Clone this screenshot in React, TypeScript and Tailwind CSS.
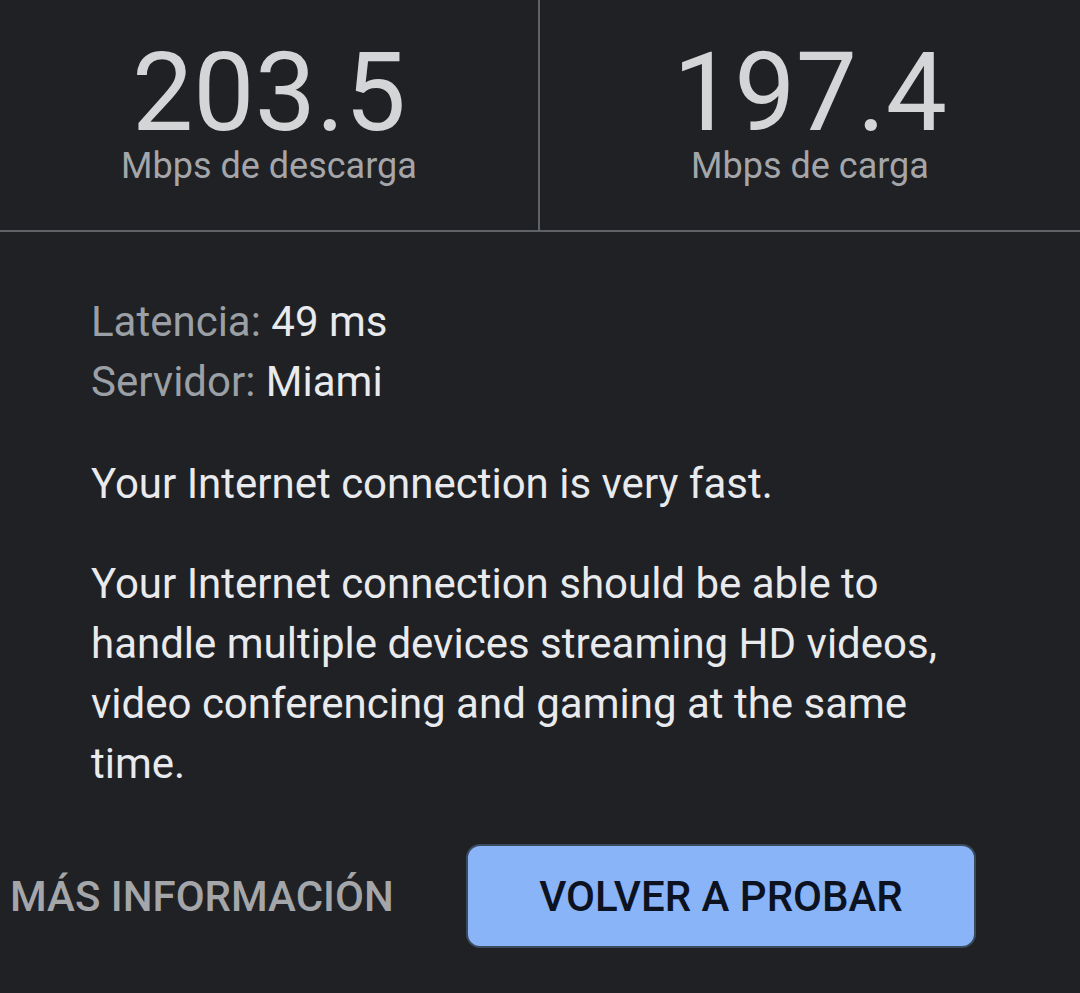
export default function App() {
  return (
    <div
      className="w-[1080px] h-[993px] bg-[#202124] overflow-hidden"
      style={{ fontFamily: "Roboto, 'Noto Sans', sans-serif" }}
    >
      <div className="grid grid-cols-2 h-[232px] border-b-2 border-[#5f6368]">
        <div className="flex flex-col items-center border-r-2 border-[#5f6368] pt-[48px]">
          <div className="text-[109px] leading-[90px] text-[#d4d5d7]">203.5</div>
          <div className="text-[36px] leading-[44px] text-[#a4a6aa] mt-[6px]">Mbps de descarga</div>
        </div>
        <div className="flex flex-col items-center pt-[48px]">
          <div className="text-[109px] leading-[90px] text-[#d4d5d7]">197.4</div>
          <div className="text-[36px] leading-[44px] text-[#a4a6aa] mt-[6px]">Mbps de carga</div>
        </div>
      </div>
      <div className="pl-[91px] pr-[129px] pt-[60px] text-[42px] leading-[60px]">
        <div>
          <span className="text-[#9aa0a6]">Latencia: </span>
          <span className="text-[#e8eaed]">49 ms</span>
        </div>
        <div>
          <span className="text-[#9aa0a6]">Servidor: </span>
          <span className="text-[#e8eaed]">Miami</span>
        </div>
        <p className="text-[#e8eaed] mt-[42px]">Your Internet connection is very fast.</p>
        <p className="text-[#e8eaed] mt-[40px]">
          Your Internet connection should be able to handle multiple devices streaming HD videos, video conferencing and gaming at the same time.
        </p>
      </div>
      <div className="flex items-center mt-[50px]">
        <div className="w-[466px] pl-[10px] text-[42px] font-medium text-[#a4a6aa] uppercase">
          MÁS INFORMACIÓN
        </div>
        <button className="w-[510px] h-[104px] rounded-[14px] bg-[#8ab4f8] border-2 border-[#3c4a5e] text-[42px] font-medium text-[#0c1220]">
          VOLVER A PROBAR
        </button>
      </div>
    </div>
  );
}
